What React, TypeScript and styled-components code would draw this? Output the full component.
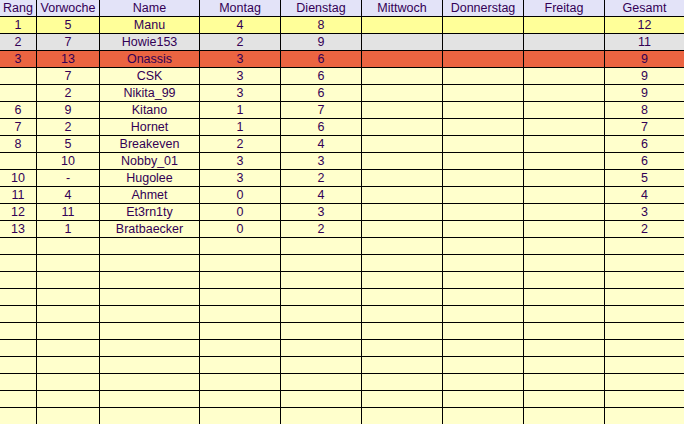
import React from 'react';
import styled, { createGlobalStyle } from 'styled-components';

const GlobalStyle = createGlobalStyle`
  html, body {
    margin: 0;
    padding: 0;
    background: #ffffcc;
    overflow: hidden;
  }
`;

type RowTone = 'first' | 'second' | 'third' | 'plain' | 'head';

const toneColors: Record<RowTone, string> = {
  head: '#e3e3f8',
  first: '#ffff99',
  second: '#e3e3e3',
  third: '#eb6441',
  plain: '#ffffcc',
};

const Table = styled.div`
  display: grid;
  grid-template-columns: 37px 63px 100px 81px 81px 81px 81px 81px 1fr;
  width: 684px;
  height: 424px;
  overflow: hidden;
  font-family: 'Liberation Sans', Arial, sans-serif;
  font-size: 12.5px;
  color: #330055;
`;

const Row = styled.div<{ $tone: RowTone }>`
  display: contents;
  & > div {
    background: ${(p) => toneColors[p.$tone]};
  }
`;

const Cell = styled.div<{ $last?: boolean }>`
  box-sizing: border-box;
  height: 17px;
  line-height: 16px;
  text-align: center;
  white-space: nowrap;
  overflow: hidden;
  border-bottom: 1px solid #000;
  border-right: ${(p) => (p.$last ? 'none' : '1px solid #000')};
`;

const headers = ['Rang', 'Vorwoche', 'Name', 'Montag', 'Dienstag', 'Mittwoch', 'Donnerstag', 'Freitag', 'Gesamt'];

const data: string[][] = [
  ['1', '5', 'Manu', '4', '8', '', '', '', '12'],
  ['2', '7', 'Howie153', '2', '9', '', '', '', '11'],
  ['3', '13', 'Onassis', '3', '6', '', '', '', '9'],
  ['', '7', 'CSK', '3', '6', '', '', '', '9'],
  ['', '2', 'Nikita_99', '3', '6', '', '', '', '9'],
  ['6', '9', 'Kitano', '1', '7', '', '', '', '8'],
  ['7', '2', 'Hornet', '1', '6', '', '', '', '7'],
  ['8', '5', 'Breakeven', '2', '4', '', '', '', '6'],
  ['', '10', 'Nobby_01', '3', '3', '', '', '', '6'],
  ['10', '-', 'Hugolee', '3', '2', '', '', '', '5'],
  ['11', '4', 'Ahmet', '0', '4', '', '', '', '4'],
  ['12', '11', 'Et3rn1ty', '0', '3', '', '', '', '3'],
  ['13', '1', 'Bratbaecker', '0', '2', '', '', '', '2'],
];

// leere Zeilen bis zum unteren Rand
const emptyRows = 12;

const toneFor = (i: number): RowTone => {
  if (i === 0) return 'first';
  if (i === 1) return 'second';
  if (i === 2) return 'third';
  return 'plain';
};

const App = () => {
  const rows = [...data, ...Array.from({ length: emptyRows }, () => headers.map(() => ''))];
  return (
    <>
      <GlobalStyle />
      <Table>
        <Row $tone="head">
          {headers.map((h, c) => (
            <Cell key={h} $last={c === headers.length - 1}>{h}</Cell>
          ))}
        </Row>
        {rows.map((r, i) => (
          <Row key={i} $tone={toneFor(i)}>
            {r.map((v, c) => (
              <Cell key={c} $last={c === r.length - 1}>{v}</Cell>
            ))}
          </Row>
        ))}
      </Table>
    </>
  );
};

export default App;
